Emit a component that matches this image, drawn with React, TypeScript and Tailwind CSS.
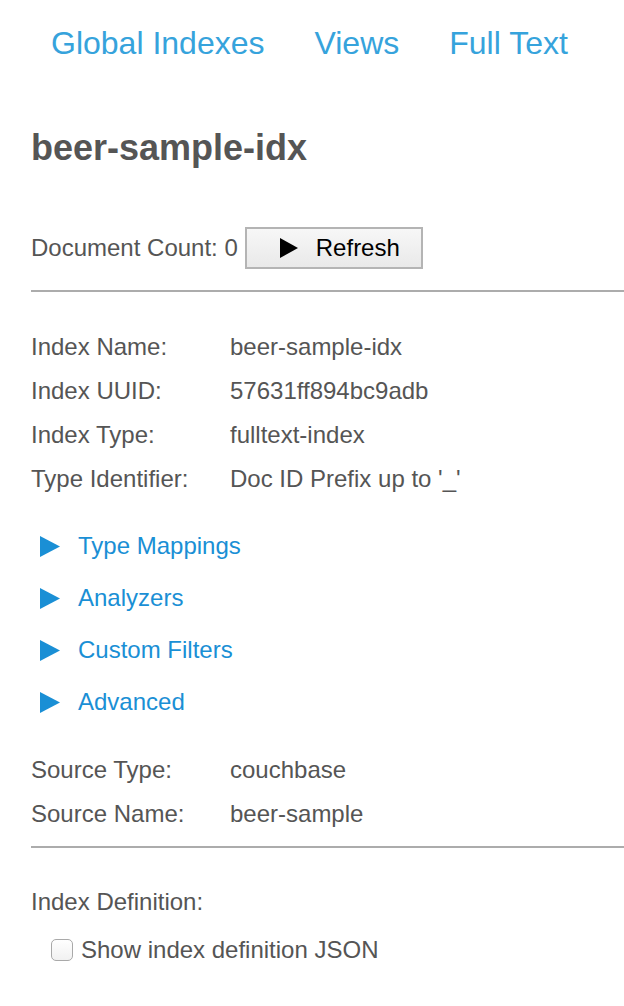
import React from "react";

const info = [
  ["Index Name:", "beer-sample-idx"],
  ["Index UUID:", "57631ff894bc9adb"],
  ["Index Type:", "fulltext-index"],
  ["Type Identifier:", "Doc ID Prefix up to '_'"],
];

const sections = ["Type Mappings", "Analyzers", "Custom Filters", "Advanced"];

function Row({ label, value }: { label: string; value: string }) {
  return (
    <div className="flex h-[44px] items-center">
      <span className="w-[199px] shrink-0">{label}</span>
      <span>{value}</span>
    </div>
  );
}

export default function App() {
  return (
    <div className="min-h-screen overflow-hidden bg-white font-['Liberation_Sans',Arial,sans-serif] text-[24px] text-[#555]">
      <nav className="flex gap-[50px] pl-[51px] pt-[25px] text-[32px] leading-[36px] text-[#36a3dc]">
        <a href="#">Global Indexes</a>
        <a href="#">Views</a>
        <a href="#">Full Text</a>
      </nav>

      <div className="pl-[31px]">
        <h1 className="mt-[65px] text-[36px] font-bold leading-[44px] text-[#555]">beer-sample-idx</h1>

        <div className="mt-[57px] flex h-[42px] items-center gap-[7px]">
          <span>Document Count: 0</span>
          <button
            type="button"
            className="flex h-[42px] w-[178px] items-center gap-[18px] border-2 border-[#b4b4b4] bg-gradient-to-b from-[#f7f7f7] to-[#e9e9e9] pl-[33px] text-black"
          >
            <svg width="18" height="20" viewBox="0 0 18 20" aria-hidden="true">
              <polygon points="0,0 18,10 0,20" fill="#000" />
            </svg>
            <span>Refresh</span>
          </button>
        </div>

        <hr className="mt-[21px] border-t-2 border-[#acacac]" />

        <div className="mt-[33px]">
          {info.map(([l, v]) => (
            <Row key={l} label={l} value={v} />
          ))}
        </div>

        <div className="mt-[19px] pl-[9px]">
          {sections.map((s) => (
            <div key={s} className="flex h-[52px] items-center gap-[18px] text-[#1a8fd5]">
              <svg width="20" height="21" viewBox="0 0 20 21" aria-hidden="true">
                <polygon points="0,0 20,10.5 0,21" fill="#1a8fd5" />
              </svg>
              <a href="#">{s}</a>
            </div>
          ))}
        </div>

        <div className="mt-[20px]">
          <Row label="Source Type:" value="couchbase" />
          <Row label="Source Name:" value="beer-sample" />
        </div>

        <hr className="mt-[10px] border-t-2 border-[#acacac]" />

        <div className="mt-[32px] flex h-[44px] items-center">Index Definition:</div>

        <label className="mt-[4px] flex h-[44px] items-center gap-[8px] pl-[20px]">
          <span className="h-[22px] w-[22px] rounded-[5px] border border-[#a9a9a9] bg-gradient-to-b from-white to-[#f1f1f1]" />
          <span>Show index definition JSON</span>
        </label>
      </div>
    </div>
  );
}
